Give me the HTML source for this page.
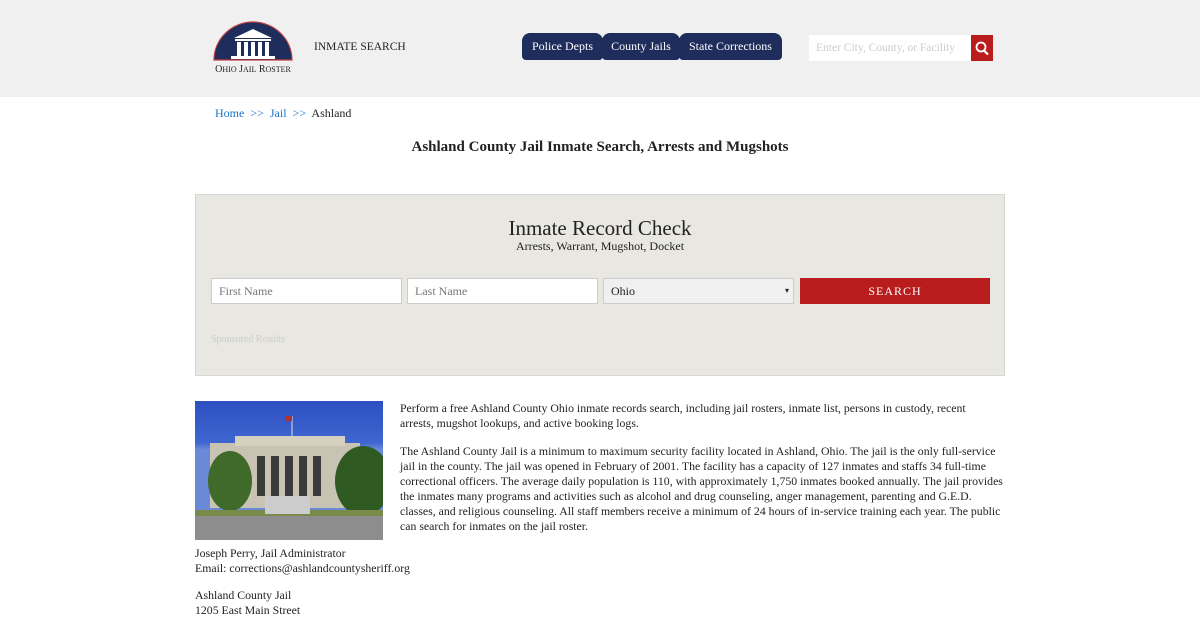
<!DOCTYPE html>
<html><head><meta charset="utf-8"><style>
*{margin:0;padding:0;box-sizing:border-box}
body{width:1200px;height:620px;overflow:hidden;background:#fff;font-family:"Liberation Serif","DejaVu Serif",serif;color:#222;font-size:11.5px}
.hdr{height:97px;background:#f0f0f0;position:relative}
.logo{position:absolute;left:206px;top:20px;width:94px;height:56px}
.logo .t{position:absolute;left:0;top:44px;width:94px;text-align:center;font-size:10px;color:#222;white-space:nowrap}
.is{position:absolute;left:314px;top:41px;font-size:11.5px;color:#222}
.tab{position:absolute;top:33px;height:27px;background:#1f2d5c;color:#fff;font-size:12px;line-height:27px;text-align:center;border-radius:8px 8px 4px 4px;white-space:nowrap}
.srch{position:absolute;left:809px;top:35px;width:162px;height:26px;background:#fff;color:#ccc;font-size:11.5px;line-height:26px;padding-left:7px;white-space:nowrap;overflow:hidden}
.sb{position:absolute;left:971px;top:35px;width:22px;height:26px;background:#b81c1c}
.bc{position:absolute;left:215px;top:106px;font-size:12px}
.bc a{color:#1a73c9;text-decoration:none}
h1{position:absolute;left:0;width:1200px;top:139px;text-align:center;font-size:15px;font-weight:bold;color:#222}
.box{position:absolute;left:195px;top:194px;width:810px;height:182px;background:#e8e7e1;border:1px solid #d8d8d2}
.box h2{position:absolute;top:21px;width:100%;text-align:center;font-weight:normal;font-size:21px;color:#222}
.box .s{position:absolute;top:44px;width:100%;text-align:center;font-size:12px}
.in{position:absolute;top:83px;height:26px;background:#fff;border:1px solid #ccc;color:#777;font-size:12px;line-height:24px;padding-left:7px}
.btn{position:absolute;left:604px;top:83px;width:190px;height:26px;background:#b81c1c;color:#fff;text-align:center;line-height:26px;font-size:12px;letter-spacing:1px}
.sp{position:absolute;left:15px;top:139px;color:#ccc;font-size:10px}
.img{position:absolute;left:195px;top:401px;width:188px;height:139px;overflow:hidden;background:linear-gradient(#2d4fc2 0,#3f66d0 30%,#6a8ad8 35%)}
p{position:absolute;left:400px;width:606px;line-height:15px;font-size:11.8px}
.l{position:absolute;left:195px;line-height:15px;font-size:11.8px}
</style></head><body>
<div class="hdr">
 <div class="logo">
  <svg width="94" height="46" viewBox="-2 0 94 46"><path d="M6 40 A39 38 0 0 1 84 40 Z" fill="#1f2d5c" stroke="#c04040" stroke-width="1.2"/><polygon points="26,18 45,9 64,18" fill="#fff"/><rect x="27" y="19" width="36" height="2" fill="#fff"/><g fill="#fff"><rect x="29" y="22" width="4" height="14"/><rect x="36" y="22" width="4" height="14"/><rect x="43" y="22" width="4" height="14"/><rect x="50" y="22" width="4" height="14"/><rect x="57" y="22" width="4" height="14"/></g><rect x="23" y="36" width="44" height="3" fill="#fff"/></svg>
  <div class="t">O<span style="font-size:8px">HIO</span> J<span style="font-size:8px">AIL</span> R<span style="font-size:8px">OSTER</span></div>
 </div>
 <div class="is">INMATE SEARCH</div>
 <div class="tab" style="left:522px;width:81px">Police Depts</div>
 <div class="tab" style="left:602px;width:78px">County Jails</div>
 <div class="tab" style="left:679px;width:103px">State Corrections</div>
 <div class="srch">Enter City, County, or Facility</div>
 <div class="sb"><svg width="22" height="26"><circle cx="10" cy="12" r="4.5" fill="none" stroke="#fff" stroke-width="1.8"/><line x1="13" y1="15.5" x2="17" y2="19.5" stroke="#fff" stroke-width="2.2"/></svg></div>
</div>
<div class="bc"><a>Home</a> &nbsp;<a>&gt;&gt;</a>&nbsp; <a>Jail</a> &nbsp;<a>&gt;&gt;</a>&nbsp; Ashland</div>
<h1>Ashland County Jail Inmate Search, Arrests and Mugshots</h1>
<div class="box">
 <h2>Inmate Record Check</h2>
 <div class="s">Arrests, Warrant, Mugshot, Docket</div>
 <div class="in" style="left:15px;width:191px">First Name</div>
 <div class="in" style="left:211px;width:191px">Last Name</div>
 <div class="in" style="left:407px;width:191px;background:#f0f0f0;color:#222">Ohio<span style="position:absolute;right:4px;font-size:8px">▾</span></div>
 <div class="btn">SEARCH</div>
 <div class="sp">Sponsored Results</div>
</div>
<div class="img"><svg width="188" height="139"><rect x="15" y="42" width="150" height="65" fill="#c9c3b4"/><rect x="40" y="35" width="110" height="10" fill="#d6d0c0"/><g fill="#3a3a3a"><rect x="62" y="55" width="8" height="40"/><rect x="76" y="55" width="8" height="40"/><rect x="90" y="55" width="8" height="40"/><rect x="104" y="55" width="8" height="40"/><rect x="118" y="55" width="8" height="40"/></g><line x1="97" y1="15" x2="97" y2="35" stroke="#ddd"/><rect x="90" y="15" width="7" height="5" fill="#a33"/><ellipse cx="35" cy="80" rx="22" ry="30" fill="#3f6a2a"/><ellipse cx="168" cy="80" rx="28" ry="35" fill="#2f5a22"/><rect x="0" y="109" width="188" height="6" fill="#7a8a4a"/><rect x="0" y="115" width="188" height="24" fill="#8d8d8d"/><rect x="70" y="95" width="45" height="18" fill="#ccc"/></svg></div>
<p style="top:401px">Perform a free Ashland County Ohio inmate records search, including jail rosters, inmate list, persons in custody, recent<br>arrests, mugshot lookups, and active booking logs.</p>
<p style="top:444px">The Ashland County Jail is a minimum to maximum security facility located in Ashland, Ohio. The jail is the only full-service<br>jail in the county. The jail was opened in February of 2001. The facility has a capacity of 127 inmates and staffs 34 full-time<br>correctional officers. The average daily population is 110, with approximately 1,750 inmates booked annually. The jail provides<br>the inmates many programs and activities such as alcohol and drug counseling, anger management, parenting and G.E.D.<br>classes, and religious counseling. All staff members receive a minimum of 24 hours of in-service training each year. The public<br>can search for inmates on the jail roster.</p>
<div class="l" style="top:546px">Joseph Perry, Jail Administrator<br>Email: corrections@ashlandcountysheriff.org</div>
<div class="l" style="top:588px">Ashland County Jail<br>1205 East Main Street</div>
</body></html>
